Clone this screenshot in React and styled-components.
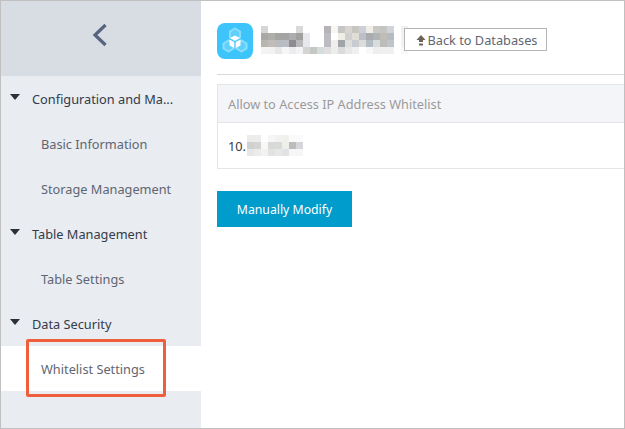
import React from 'react';
import styled, { createGlobalStyle } from 'styled-components';

const titleMosaic = [
  ['#d6d6d6', '#fff', '#fff', '#fff', '#fff', '#d9d9d9', '#fff', '#fff', '#fff', '#b5b2b8', '#f8f6f2', '#c6c6c6', '#d8d5d0', '#c8c4c0', '#ccd0d6', '#f0ede6', '#c8c8c4', '#c4c4c0', '#d0d4d8', '#fff', '#f0f0f0'],
  ['#aaa8a4', '#b0aeab', '#a4a4a0', '#a4a4a4', '#adacb0', '#a0a09c', '#e6e8ee', '#fff', '#fff', '#bdbcc2', '#fff', '#f0ede5', '#d0d0d0', '#e0ddd6', '#bcc0c6', '#a8acb0', '#b0b4b6', '#c0bcb6', '#b4bcc2', '#fff', '#f2f2f2'],
  ['#b8b4ae', '#c0bcb8', '#b8bcc0', '#b8bcc4', '#8e8c90', '#b8b8bc', '#e6e8ee', '#fff', '#fff', '#bcbcc0', '#f0eeec', '#a0a4a8', '#dedede', '#c8ccd0', '#dcdcdc', '#b4bcc4', '#d8dcdc', '#bcbcb8', '#c0c4c8', '#fff', '#f2f2f2'],
  ['#f4f4f4', '#f2f2f2', '#e8e8e8', '#f6f6f6', '#ececf0', '#f4f4f4', '#d4d4d2', '#c4c8c4', '#d4dcdc', '#e0e0e0', '#ecece8', '#dcdcdc', '#e8e8e8', '#f0f0f0', '#fff', '#f8f8f8', '#eeeeee', '#f0f0f0', '#f0f0f0', '#fff', '#f8f8f8'],
];

const ipMosaic = [
  ['#ececec', '#ececec', '#fff', '#f6f6f6', '#f2f2f2', '#f0f0ec', '#fafafa', '#fafafa'],
  ['#d0d0d0', '#d4d4d4', '#f8f8f6', '#d8dad8', '#d8dad8', '#f0eee8', '#bcbcbe', '#d4d6da'],
  ['#e6e6e6', '#ececec', '#f2f2f0', '#e2e2e2', '#e6e8e8', '#e0e2e4', '#f6f6f8', '#f6f6f6'],
];

const Mosaic = ({ rows, cell }) => (
  <svg width={rows[0].length * cell} height={rows.length * cell} shapeRendering="crispEdges" style={{ display: 'block' }}>
    {rows.map((row, y) =>
      row.map((fill, x) => <rect key={`${x}-${y}`} x={x * cell} y={y * cell} width={cell} height={cell} fill={fill} />)
    )}
  </svg>
);

const App = () => {
  return (
    <>
      <GlobalStyle />
      <StFrame>
        <StSidebar>
          <StCollapse>
            <svg width="16" height="24" viewBox="0 0 16 24">
              <path d="M13.5 2 L3 12 L13.5 22" fill="none" stroke="#56657f" strokeWidth="3.2" />
            </svg>
          </StCollapse>
          <StGroup><StCaret />Configuration and Ma...</StGroup>
          <StItem>Basic Information</StItem>
          <StItem>Storage Management</StItem>
          <StGroup><StCaret />Table Management</StGroup>
          <StItem>Table Settings</StItem>
          <StGroup><StCaret />Data Security</StGroup>
          <StItem $active>
            Whitelist Settings
            <StHighlight />
          </StItem>
        </StSidebar>

        <StMain>
          <StHeader>
            <StLogo width="36" height="36" viewBox="0 0 36 36">
              <rect width="36" height="36" rx="8" fill="#3cc4fb" />
              <path d="M18 5.5 L23 8.5 V14.5 L18 17.5 L13 14.5 V8.5 Z" fill="#5fcffc" stroke="#8adefd" strokeWidth="2" />
              <path d="M11.5 17.5 L16.5 20.5 V25.5 L11.5 28.5 L6.5 25.5 V20.5 Z" fill="#5fcffc" stroke="#8adefd" strokeWidth="2" />
              <path d="M24.5 17.5 L29.5 20.5 V25.5 L24.5 28.5 L19.5 25.5 V20.5 Z" fill="#5fcffc" stroke="#8adefd" strokeWidth="2" />
              <path d="M18 12.5 L23 15 L18 17.5 L13 15 Z M12.5 16.5 L17.2 19 V25 L12.5 22.5 Z M23.5 16.5 L18.8 19 V25 L23.5 22.5 Z" fill="#fff" />
            </StLogo>
            <StTitleMosaic><Mosaic rows={titleMosaic} cell={7} /></StTitleMosaic>
            <StBackButton>
              <svg width="10" height="12" viewBox="0 0 10 12">
                <path d="M5 1 L9.5 6 H7 V8 H3 V6 H0.5 Z M3 9.5 H7 V11.5 H3 Z" fill="#6b6259" />
              </svg>
              Back to Databases
            </StBackButton>
          </StHeader>

          <StTable>
            <StTableHead>Allow to Access IP Address Whitelist</StTableHead>
            <StTableRow>
              <StIpPrefix>10.</StIpPrefix>
              <Mosaic rows={ipMosaic} cell={7} />
            </StTableRow>
          </StTable>

          <StPrimaryButton>Manually Modify</StPrimaryButton>
        </StMain>
      </StFrame>
    </>
  );
};

const GlobalStyle = createGlobalStyle`
  html, body {
    margin: 0;
    padding: 0;
    background: #fff;
  }
  * {
    box-sizing: border-box;
  }
`;

const StFrame = styled.div`
  width: 625px;
  height: 429px;
  display: flex;
  overflow: hidden;
  border: 1px solid #c0c0c0;
  font-family: "Noto Sans", sans-serif;
  font-size: 12.75px;
`;

const StSidebar = styled.nav`
  width: 200px;
  flex-shrink: 0;
  background-color: #e9ecf1;
`;

const StCollapse = styled.div`
  height: 75px;
  display: flex;
  align-items: center;
  justify-content: center;
  padding-right: 2px;
  padding-bottom: 8px;
  background-color: #d8dce3;
`;

const StGroup = styled.div`
  height: 45px;
  display: flex;
  align-items: center;
  padding-left: 9px;
  color: #333b4a;
`;

const StCaret = styled.span`
  width: 0;
  height: 0;
  margin-right: 12px;
  margin-top: -3px;
  border-left: 5.5px solid transparent;
  border-right: 5.5px solid transparent;
  border-top: 6px solid #2c3038;
`;

const StItem = styled.div`
  position: relative;
  height: 45px;
  display: flex;
  align-items: center;
  padding-left: 40px;
  color: #5f6672;
  background-color: ${props => (props.$active ? '#fff' : 'transparent')};
`;

const StHighlight = styled.span`
  position: absolute;
  left: 25px;
  top: -7px;
  width: 140px;
  height: 58px;
  border: 3px solid #f05f3c;
  border-radius: 2px;
`;

const StMain = styled.main`
  flex: 1;
  min-width: 0;
  padding-left: 16px;
`;

const StHeader = styled.div`
  height: 74px;
  display: flex;
  align-items: center;
  padding-top: 20px;
  padding-bottom: 13px;
  border-bottom: 1px solid #d9d9d9;
`;

const StLogo = styled.svg`
  flex-shrink: 0;
`;

const StTitleMosaic = styled.div`
  flex-shrink: 0;
  margin-left: 8px;
  margin-top: -2px;
`;

const StBackButton = styled.div`
  position: relative;
  flex-shrink: 0;
  height: 23px;
  width: 143px;
  margin-left: -4px;
  margin-top: -3px;
  display: flex;
  align-items: center;
  justify-content: center;
  gap: 2px;
  padding-left: 2px;
  background-color: #fff;
  border: 1px solid #b5b5b5;
  color: #5f6672;
`;

const StTable = styled.div`
  margin-top: 9px;
  border: 1px solid #e3e5e9;
  border-right: none;
`;

const StTableHead = styled.div`
  height: 38px;
  display: flex;
  align-items: center;
  padding-left: 10px;
  background-color: #f4f5f9;
  border-bottom: 1px solid #e3e5e9;
  color: #9a9a9a;
`;

const StTableRow = styled.div`
  height: 45px;
  display: flex;
  align-items: center;
  padding-left: 10px;
  color: #333b4a;
`;

const StIpPrefix = styled.span`
  width: 19px;
`;

const StPrimaryButton = styled.button`
  display: block;
  width: 135px;
  height: 36px;
  margin-top: 22px;
  padding: 0;
  border: none;
  background-color: #009ccc;
  color: #fff;
  font: inherit;
  font-size: 12.25px;
`;

export default App;
